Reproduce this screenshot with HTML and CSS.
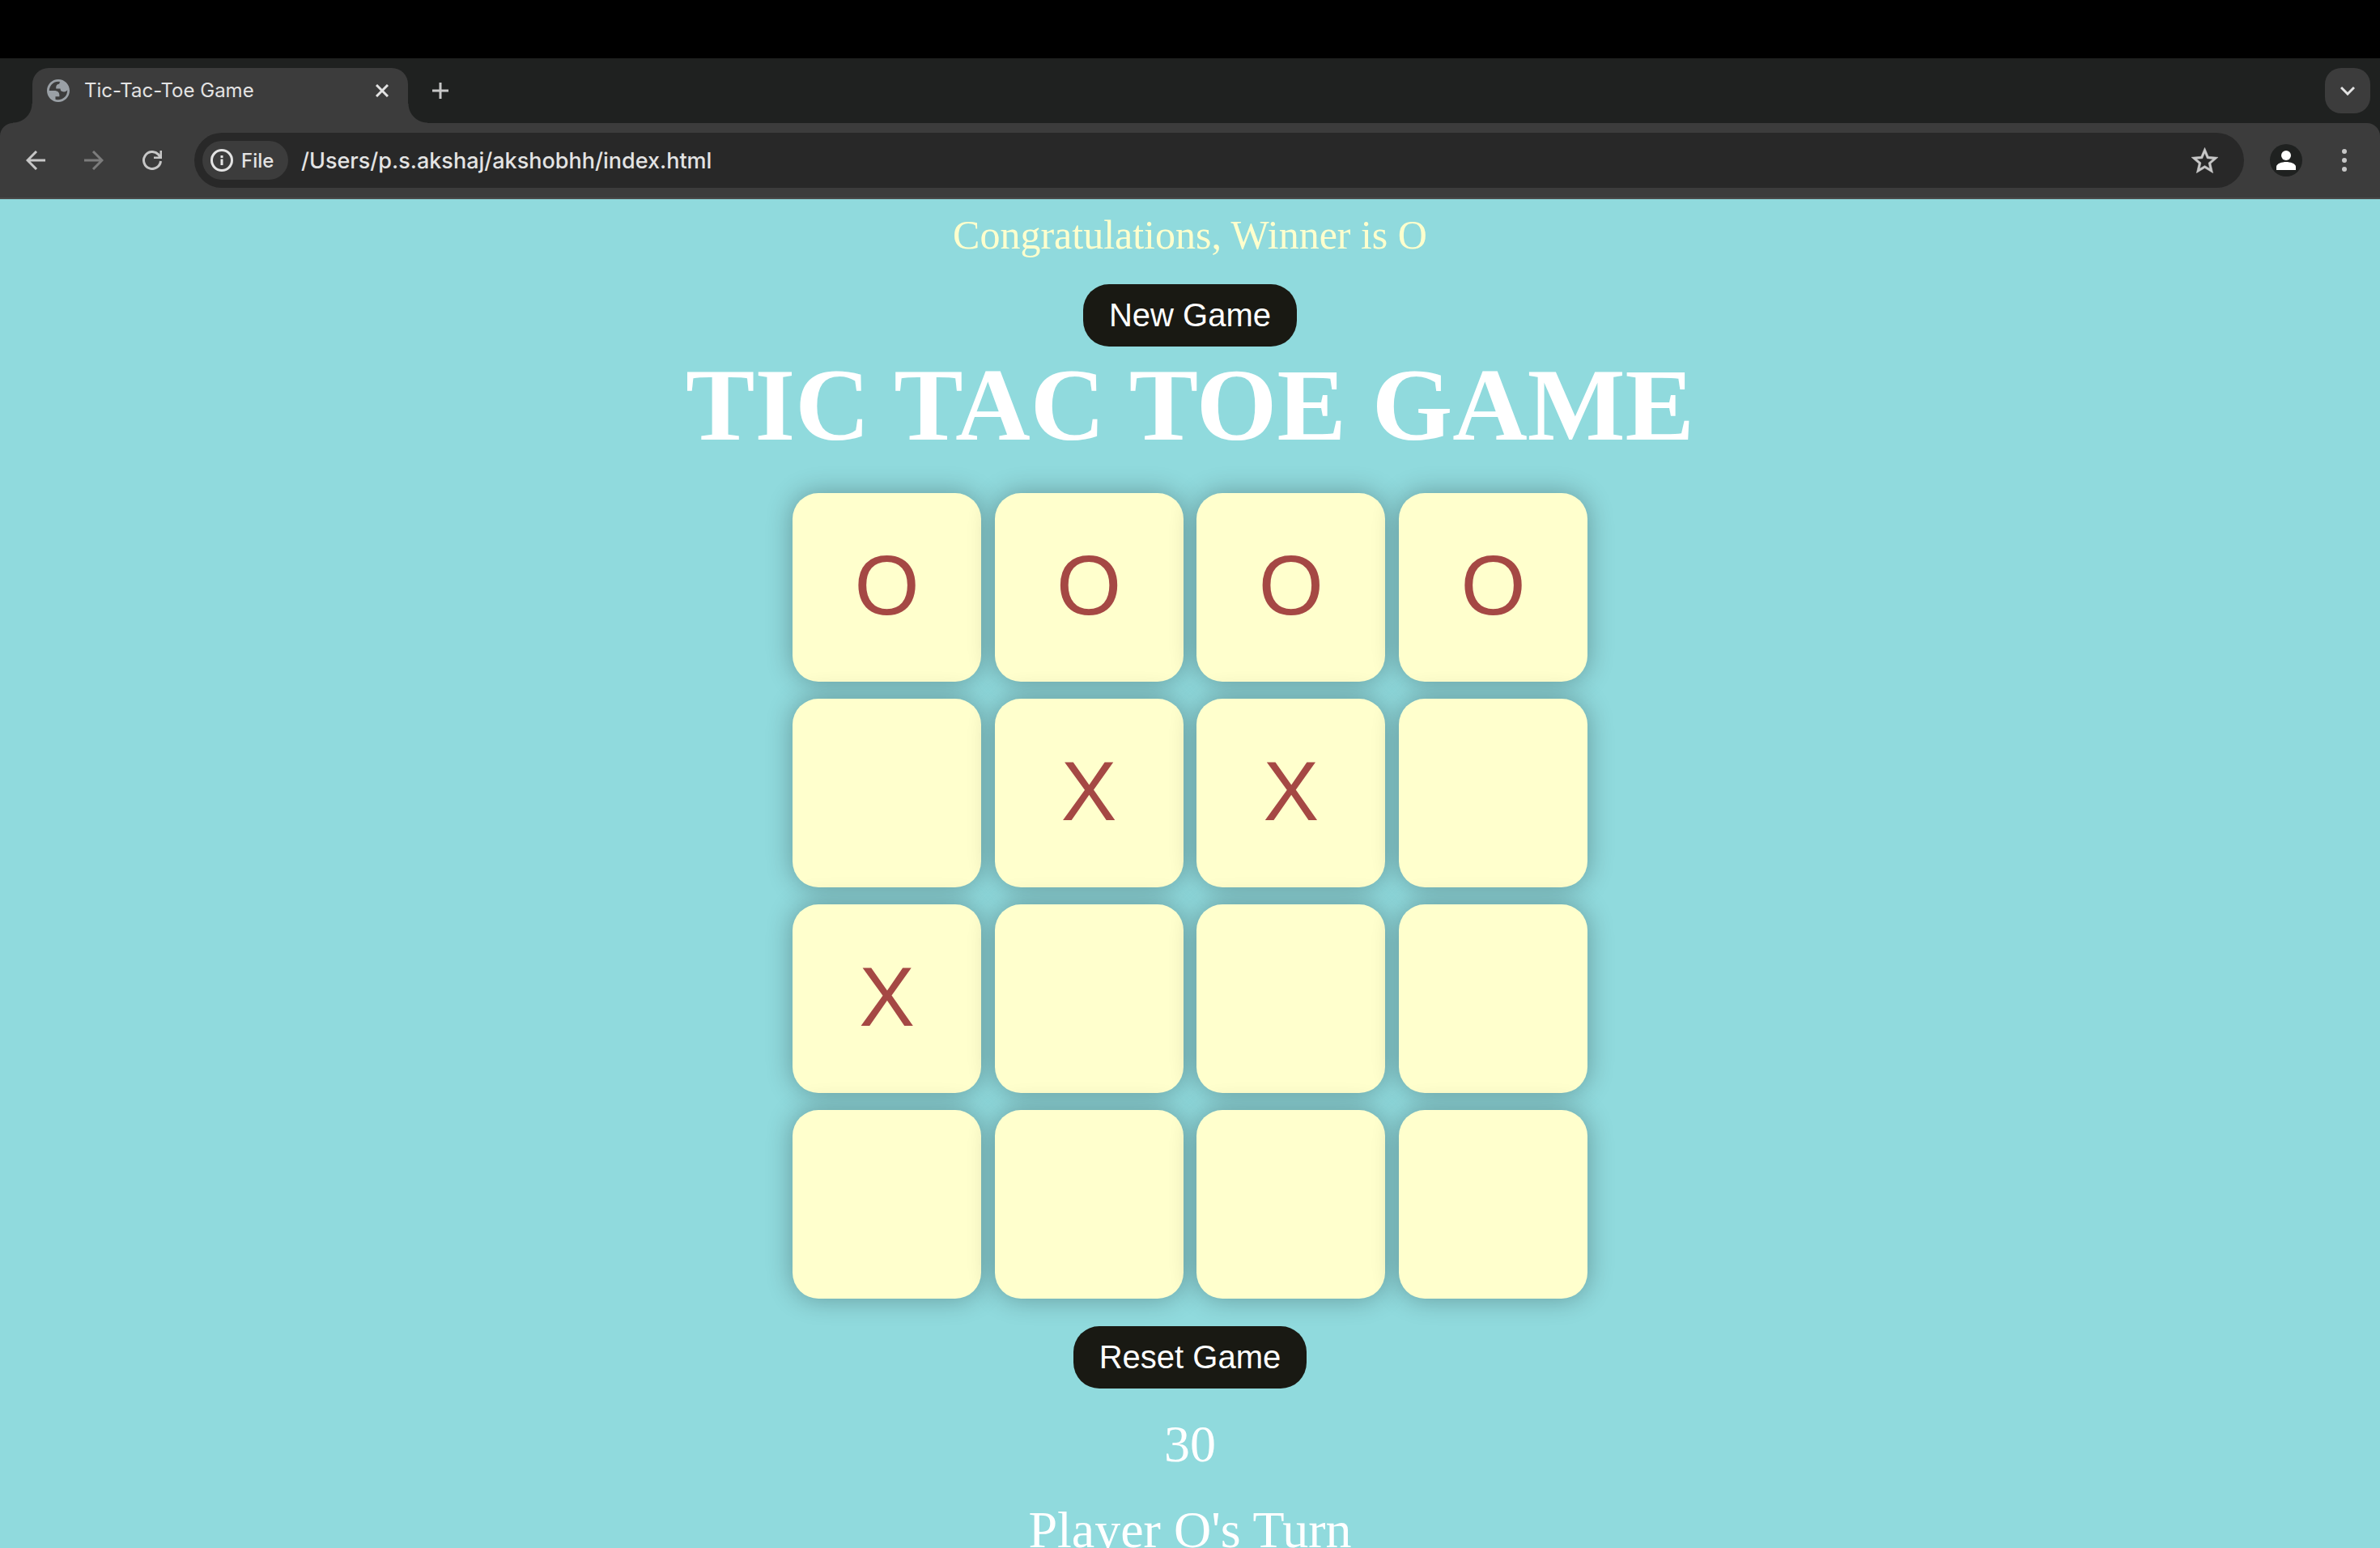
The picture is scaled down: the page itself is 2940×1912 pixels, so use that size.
FILE: index.html
```html
<!DOCTYPE html>
<html lang="en">
<head>
  <meta charset="utf-8">
  <meta name="viewport" content="width=device-width, initial-scale=1">
  <title>Tic-Tac-Toe Game</title>
  <link rel="stylesheet" href="styles.css">
</head>
<body>
  <div class="menu-strip"></div>
  <header class="browser">
    <div class="tab-strip">
      <div class="tab">
        <svg class="icon-globe" viewBox="2 2 20 20" aria-hidden="true"><path fill="#9aa0a6" fill-rule="evenodd" d="M12 2C6.480 2 2 6.480 2 12s4.480 10 10 10 10-4.480 10-10S17.520 2 12 2zM4 12h4.400c3.407.022 4.922 1.730 4.543 5.127H9.488v2.470a8.004 8.004 0 0 0 10.498-8.083C19.327 12.504 18.332 13 17 13c-2.137 0-3.206-.916-3.206-2.750h-3.748c-.274-2.728.683-4.092 2.870-4.092 0-.975.327-1.597.811-1.970A8.004 8.004 0 0 0 4 12z"/></svg>
        <span class="tab-title">Tic-Tac-Toe Game</span>
        <button class="tab-close" type="button" aria-label="Close tab">
          <svg viewBox="0 0 16 16" aria-hidden="true"><path d="M1 1l14 14M15 1L1 15" fill="none" stroke="#e3e3e3" stroke-width="3"/></svg>
        </button>
      </div>
      <button class="new-tab" type="button" aria-label="New tab">
        <svg viewBox="0 0 20 20" aria-hidden="true"><path d="M10 0v20M0 10h20" fill="none" stroke="#c7c7c7" stroke-width="3"/></svg>
      </button>
      <button class="tab-search" type="button" aria-label="Search tabs">
        <svg viewBox="0 0 18 12" aria-hidden="true"><path d="M1 2l8 8 8-8" fill="none" stroke="#e3e3e3" stroke-width="3"/></svg>
      </button>
    </div>
    <div class="toolbar">
      <div class="nav">
        <button class="nav-button" type="button" aria-label="Back">
          <svg viewBox="0 0 24 24" aria-hidden="true"><path d="M24 12H2M13 1L2 12l11 11" fill="none" stroke="#c7c7c7" stroke-width="3"/></svg>
        </button>
        <button class="nav-button" type="button" aria-label="Forward" disabled>
          <svg viewBox="0 0 24 24" aria-hidden="true"><path d="M0 12h22M11 1l11 11-11 11" fill="none" stroke="#7c7c7c" stroke-width="3"/></svg>
        </button>
        <button class="nav-button" type="button" aria-label="Reload">
          <svg viewBox="0 0 24 24" aria-hidden="true"><path d="M22.500 13A10.500 10.500 0 1 1 19.500 4.600L22 8" fill="none" stroke="#c7c7c7" stroke-width="3"/><path d="M21.500 0H24v10H14V7.500h7.500z" fill="#c7c7c7"/></svg>
        </button>
      </div>
      <div class="omnibox">
        <button class="site-chip" type="button">
          <svg viewBox="0 0 28 28" aria-hidden="true"><circle cx="14" cy="14" r="12.500" fill="none" stroke="#e3e3e3" stroke-width="3"/><path d="M12.500 12.500h3V20h-3zM12.500 8h3v3h-3z" fill="#e3e3e3"/></svg>
          File
        </button>
        <input class="address" type="text" aria-label="Address" value="/Users/p.s.akshaj/akshobhh/index.html" spellcheck="false">
        <button class="bookmark" type="button" aria-label="Bookmark this page">
          <svg viewBox="2 2 20 19" aria-hidden="true"><path fill="#c7c7c7" stroke="#c7c7c7" stroke-width=".3" d="M22 9.240l-7.190-.620L12 2 9.190 8.630 2 9.240l5.460 4.730L5.820 21 12 17.270 18.180 21l-1.630-7.030L22 9.240zM12 15.400l-3.760 2.270 1-4.280-3.320-2.880 4.380-.380L12 6.100l1.710 4.040 4.380.380-3.320 2.880 1 4.280L12 15.400z"/></svg>
        </button>
      </div>
      <button class="profile" type="button" aria-label="Profile">
        <svg viewBox="0 0 40 40" aria-hidden="true"><circle cx="20" cy="20" r="20" fill="#1f2120"/><circle cx="20" cy="14" r="6" fill="#fff"/><path d="M8 32v-4c0-4 7-6 12-6s12 2 12 6v4z" fill="#fff"/></svg>
      </button>
      <button class="more" type="button" aria-label="Menu">
        <svg viewBox="0 0 6 28" aria-hidden="true"><g fill="#c7c7c7"><circle cx="3" cy="3" r="3"/><circle cx="3" cy="14" r="3"/><circle cx="3" cy="25" r="3"/></g></svg>
      </button>
    </div>
  </header>
  <main class="page">
    <p class="message">Congratulations, Winner is O</p>
    <button class="game-button" type="button">New Game</button>
    <h1 class="title">TIC TAC TOE GAME</h1>
    <div class="board">
      <button class="box" type="button">O</button>
      <button class="box" type="button">O</button>
      <button class="box" type="button">O</button>
      <button class="box" type="button">O</button>
      <button class="box" type="button" aria-label="Empty"></button>
      <button class="box" type="button">X</button>
      <button class="box" type="button">X</button>
      <button class="box" type="button" aria-label="Empty"></button>
      <button class="box" type="button">X</button>
      <button class="box" type="button" aria-label="Empty"></button>
      <button class="box" type="button" aria-label="Empty"></button>
      <button class="box" type="button" aria-label="Empty"></button>
      <button class="box" type="button" aria-label="Empty"></button>
      <button class="box" type="button" aria-label="Empty"></button>
      <button class="box" type="button" aria-label="Empty"></button>
      <button class="box" type="button" aria-label="Empty"></button>
    </div>
    <button class="game-button" type="button">Reset Game</button>
    <p class="status">30</p>
    <p class="status">Player O's Turn</p>
  </main>
</body>
</html>
```
FILE: styles.css
```css
* {
  box-sizing: border-box;
  margin: 0;
  padding: 0;
}

body {
  display: flex;
  flex-direction: column;
  height: 100vh;
  overflow: hidden;
  background: #90dadd;
  font-family: "Liberation Serif", "Times New Roman", serif;
}

button,
input {
  border: 0;
  background: none;
  font-family: Inter, "Noto Sans", sans-serif;
}

svg {
  display: block;
}

/* Browser frame */

.menu-strip {
  flex: none;
  height: 72px;
  background: #000;
}

.browser {
  flex: none;
  background: #1f2120;
  font-family: Inter, "Noto Sans", sans-serif;
}

.tab-strip {
  display: flex;
  align-items: flex-start;
  height: 80px;
  padding: 12px 12px 0 40px;
}

.tab {
  position: relative;
  display: flex;
  align-items: center;
  width: 464px;
  height: 68px;
  padding: 0 24px 12px 18px;
  border-radius: 20px 20px 0 0;
  background: #3c3c3c;
}

.tab::before,
.tab::after {
  content: "";
  position: absolute;
  bottom: 0;
  width: 24px;
  height: 24px;
}

.tab::before {
  right: 100%;
  background: radial-gradient(circle at 0 0, transparent 23px, #3c3c3c 24px);
}

.tab::after {
  left: 100%;
  background: radial-gradient(circle at 100% 0, transparent 23px, #3c3c3c 24px);
}

.icon-globe {
  width: 28px;
  height: 28px;
  margin-right: 18px;
}

.tab-title {
  flex: 1;
  color: #e3e3e3;
  font-size: 24px;
  line-height: 32px;
}

.tab-close svg {
  width: 16px;
  height: 16px;
}

.new-tab {
  display: grid;
  place-items: center;
  width: 56px;
  height: 56px;
  margin-left: 12px;
}

.new-tab svg {
  width: 20px;
  height: 20px;
}

.tab-search {
  display: grid;
  place-items: center;
  width: 56px;
  height: 56px;
  margin-left: auto;
  border-radius: 20px;
  background: #3c3c3c;
}

.tab-search svg {
  width: 18px;
  height: 12px;
}

.toolbar {
  display: flex;
  align-items: center;
  height: 94px;
  padding: 12px 16px 12px 8px;
  border-bottom: 2px solid #4a4a4a;
  border-radius: 16px 16px 0 0;
  background: #3c3c3c;
}

.nav {
  display: flex;
  width: 232px;
}

.nav-button {
  display: grid;
  place-items: center;
  width: 72px;
  height: 68px;
}

.nav-button svg {
  width: 24px;
  height: 24px;
}

.omnibox {
  display: flex;
  flex: 1;
  align-items: center;
  height: 68px;
  padding: 0 32px 0 10px;
  border-radius: 34px;
  background: #282828;
}

.site-chip {
  display: flex;
  align-items: center;
  gap: 10px;
  width: 106px;
  height: 48px;
  padding-left: 10px;
  border-radius: 24px;
  background: #3c3c3c;
  color: #e3e3e3;
  font-size: 24px;
  font-weight: 500;
}

.site-chip svg {
  width: 28px;
  height: 28px;
}

.address {
  flex: 1;
  height: 48px;
  margin-left: 16px;
  color: #e3e3e3;
  font-size: 27px;
  font-weight: 500;
}

.bookmark svg {
  width: 33px;
  height: 32px;
}

.profile {
  margin-left: 32px;
}

.profile svg {
  width: 40px;
  height: 40px;
}

.more {
  display: grid;
  place-items: center;
  width: 56px;
  height: 56px;
  margin-left: 24px;
}

.more svg {
  width: 6px;
  height: 28px;
}

/* Game page */

.page {
  display: flex;
  flex: 1;
  flex-direction: column;
  align-items: center;
  min-height: 0;
  padding-top: 16px;
  overflow: hidden;
}

.page > * {
  flex: none;
}

.message {
  margin-bottom: 32px;
  color: #ffffcd;
  font-size: 50px;
  line-height: 57px;
}

.game-button {
  padding: 16px 32px;
  border-radius: 32px;
  background: #191913;
  color: #fff;
  font-family: "Liberation Sans", Arial, sans-serif;
  font-size: 40px;
  line-height: 45px;
}

.title {
  color: #fff;
  font-size: 128px;
  line-height: 145px;
}

.board {
  display: grid;
  grid-template-columns: repeat(4, 233px);
  grid-auto-rows: 233px;
  row-gap: 21px;
  justify-content: space-between;
  width: 982px;
  margin: 36px 0 34px;
}

.box {
  padding-bottom: 4px;
  border-radius: 32px;
  background: #ffffcd;
  box-shadow: 0 0 32px rgba(0, 0, 0, 0.3);
  color: #a54844;
  font-family: "Liberation Sans", Arial, sans-serif;
  font-size: 103px;
  line-height: 114px;
}

.status {
  margin-top: 32px;
  color: #fff;
  font-size: 64px;
  line-height: 74px;
}
```
